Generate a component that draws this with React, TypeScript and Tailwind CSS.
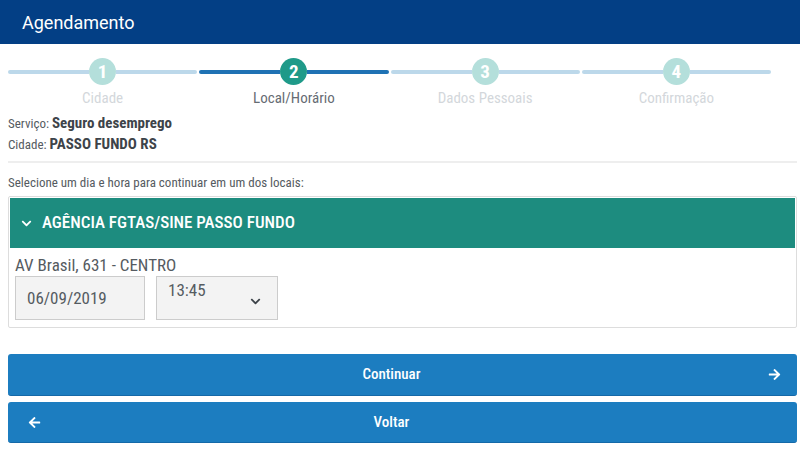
import { FaArrowRight, FaArrowLeft, FaChevronDown } from 'react-icons/fa';

const steps = [
  { n: 1, label: 'Cidade', active: false },
  { n: 2, label: 'Local/Horário', active: true },
  { n: 3, label: 'Dados Pessoais', active: false },
  { n: 4, label: 'Confirmação', active: false },
];

function Step({ n, label, active }: { n: number; label: string; active: boolean }) {
  const line = active ? 'bg-[#1f72b4]' : 'bg-[#bcd8ea]';
  return (
    <div className="flex flex-col items-center">
      <div className="flex w-full items-center">
        <div className={`h-[4px] flex-1 rounded-l-full ${line}`} />
        <div
          className={`flex h-[27px] w-[27px] items-center justify-center rounded-full text-[19px] font-bold leading-none text-white ${
            active ? 'bg-[#1f9a89]' : 'bg-[#b4dfdb]'
          }`}
        >
          {n}
        </div>
        <div className={`h-[4px] flex-1 rounded-r-full ${line}`} />
      </div>
      <div className={`mt-[4px] text-[15px] leading-[18px] ${active ? 'text-[#666c73]' : 'text-[#d3d7db]'}`}>{label}</div>
    </div>
  );
}

export default function App() {
  return (
    <div className="h-[450px] w-[800px] overflow-hidden bg-white font-['Roboto_Condensed',Roboto,sans-serif]">
      <header className="flex h-[44px] items-center bg-[#033f85] px-[22px] font-['Roboto',sans-serif] text-[18px] text-white">
        Agendamento
      </header>

      <main className="pl-2 pr-[3px]">
        <div className="mt-[14px] grid w-[763px] grid-cols-4 gap-[2px]">
          {steps.map((s) => (
            <Step key={s.n} {...s} />
          ))}
        </div>

        <div className="mt-[6px] text-[13px] leading-[20px] text-[#555b61]">
          <div>
            Serviço: <span className="text-[15px] font-bold text-[#3d4349]">Seguro desemprego</span>
          </div>
          <div>
            Cidade: <span className="text-[15px] font-bold text-[#3d4349]">PASSO FUNDO RS</span>
          </div>
        </div>

        <div className="mt-[6px] h-[2px] bg-[#eeeeee]" />

        <p className="mt-[11px] text-[13px] leading-[18px] text-[#555b61]">
          Selecione um dia e hora para continuar em um dos locais:
        </p>

        <section className="mt-[4px] rounded-[2px] border border-[#dddddd] p-px">
          <div className="flex h-[50px] items-center gap-[10px] bg-[#1d8c7f] pl-[11px] text-white">
            <FaChevronDown className="h-[11px] w-[11px]" />
            <span className="text-[17px] font-medium">AGÊNCIA FGTAS/SINE PASSO FUNDO</span>
          </div>
          <div className="px-[5px] pb-[6px] pt-[7px]">
            <div className="text-[17px] leading-[20px] text-[#555b61]">AV Brasil, 631 - CENTRO</div>
            <div className="mt-px flex gap-[11px]">
              <div className="flex h-[44px] w-[130px] items-center border border-[#cccccc] bg-[#f3f3f3] pl-[11px] pt-[2px] text-[17px] text-[#555b61]">
                06/09/2019
              </div>
              <div className="flex h-[44px] w-[122px] items-start justify-between border border-[#cccccc] bg-[#f3f3f3] pl-[11px] pr-[16px] text-[17px] text-[#555b61]">
                <span className="pt-[1px]">13:45</span>
                <FaChevronDown className="mt-[19px] h-[11px] w-[11px] text-[#3d4349]" />
              </div>
            </div>
          </div>
        </section>

        <div className="mt-[26px] flex flex-col gap-[6px]">
          <button className="relative flex h-[42px] items-center justify-center rounded-[3px] border-b border-[#1569a8] bg-[#1c7dc0] pr-[22px] text-[15px] font-medium text-white">
            Continuar
            <FaArrowRight className="absolute right-[16px] h-[13px] w-[13px]" />
          </button>
          <button className="relative flex h-[41px] items-center justify-center rounded-[3px] border-b border-[#1569a8] bg-[#1c7dc0] pr-[22px] text-[15px] font-medium text-white">
            <FaArrowLeft className="absolute left-[20px] h-[13px] w-[13px]" />
            Voltar
          </button>
        </div>
      </main>
    </div>
  );
}
